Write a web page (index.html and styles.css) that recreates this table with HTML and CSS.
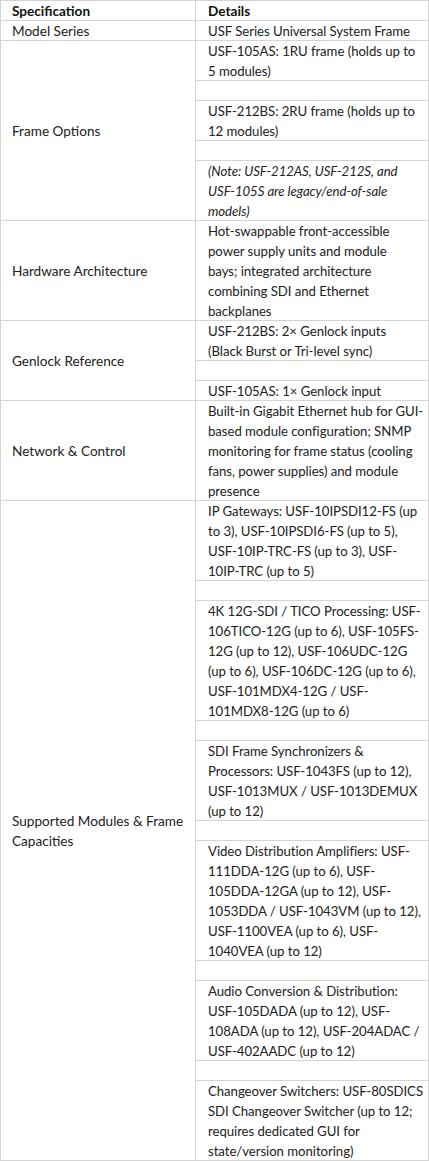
FILE: index.html
```html
<!DOCTYPE html>
<html lang="en">
<head>
<meta charset="utf-8">
<title>USF Series Universal System Frame – Specifications</title>
<link rel="stylesheet" href="styles.css">
</head>
<body>
<table class="spec-table">
  <colgroup>
    <col class="col-spec">
    <col class="col-details">
  </colgroup>
  <thead>
    <tr>
      <th class="spec">Specification</th>
      <th class="details">Details</th>
    </tr>
  </thead>
  <tbody>
    <tr>
      <td class="spec">Model Series</td>
      <td class="details">USF Series Universal System Frame</td>
    </tr>
    <tr>
      <td class="spec" rowspan="5">Frame Options</td>
      <td class="details">USF-105AS: 1RU frame (holds up to<br>5 modules)</td>
    </tr>
    <tr><td class="details blank"></td></tr>
    <tr><td class="details">USF-212BS: 2RU frame (holds up to<br>12 modules)</td></tr>
    <tr><td class="details blank"></td></tr>
    <tr><td class="details note">(Note: USF-212AS, USF-212S, and<br>USF-105S are legacy/end-of-sale<br>models)</td></tr>
    <tr>
      <td class="spec">Hardware Architecture</td>
      <td class="details">Hot-swappable front-accessible<br>power supply units and module<br>bays; integrated architecture<br>combining SDI and Ethernet<br>backplanes</td>
    </tr>
    <tr>
      <td class="spec" rowspan="3">Genlock Reference</td>
      <td class="details">USF-212BS: 2× Genlock inputs<br>(Black Burst or Tri-level sync)</td>
    </tr>
    <tr><td class="details blank"></td></tr>
    <tr><td class="details">USF-105AS: 1× Genlock input</td></tr>
    <tr>
      <td class="spec">Network &amp; Control</td>
      <td class="details">Built-in Gigabit Ethernet hub for GUI-<br>based module configuration; SNMP<br>monitoring for frame status (cooling<br>fans, power supplies) and module<br>presence</td>
    </tr>
    <tr>
      <td class="spec" rowspan="11">Supported Modules &amp; Frame Capacities</td>
      <td class="details">IP Gateways: USF-10IPSDI12-FS (up<br>to 3), USF-10IPSDI6-FS (up to 5),<br>USF-10IP-TRC-FS (up to 3), USF-<br>10IP-TRC (up to 5)</td>
    </tr>
    <tr><td class="details blank"></td></tr>
    <tr><td class="details">4K 12G-SDI / TICO Processing: USF-<br>106TICO-12G (up to 6), USF-105FS-<br>12G (up to 12), USF-106UDC-12G<br>(up to 6), USF-106DC-12G (up to 6),<br>USF-101MDX4-12G / USF-<br>101MDX8-12G (up to 6)</td></tr>
    <tr><td class="details blank"></td></tr>
    <tr><td class="details">SDI Frame Synchronizers &amp;<br>Processors: USF-1043FS (up to 12),<br>USF-1013MUX / USF-1013DEMUX<br>(up to 12)</td></tr>
    <tr><td class="details blank"></td></tr>
    <tr><td class="details">Video Distribution Amplifiers: USF-<br>111DDA-12G (up to 6), USF-<br>105DDA-12GA (up to 12), USF-<br>1053DDA / USF-1043VM (up to 12),<br>USF-1100VEA (up to 6), USF-<br>1040VEA (up to 12)</td></tr>
    <tr><td class="details blank"></td></tr>
    <tr><td class="details">Audio Conversion &amp; Distribution:<br>USF-105DADA (up to 12), USF-<br>108ADA (up to 12), USF-204ADAC /<br>USF-402AADC (up to 12)</td></tr>
    <tr><td class="details blank"></td></tr>
    <tr><td class="details">Changeover Switchers: USF-80SDICS<br>SDI Changeover Switcher (up to 12;<br>requires dedicated GUI for<br>state/version monitoring)</td></tr>
  </tbody>
</table>
</body>
</html>
```

FILE: styles.css
```css
html, body {
  margin: 0;
  padding: 0;
  background: #ffffff;
}

.spec-table {
  width: 429px;
  table-layout: fixed;
  border-collapse: separate;
  border-spacing: 0;
  border-top: 1px solid #d4d4d4;
  border-left: 1px solid #d4d4d4;
  font-family: Lato, "Open Sans", sans-serif;
  font-size: 13.6px;
  line-height: 20px;
  color: #222222;
}

.col-spec {
  width: 195px;
}

.col-details {
  width: 233px;
}

.spec-table th,
.spec-table td {
  padding: 0 1px 0 12px;
  text-align: left;
  box-shadow: inset -1px -1px 0 #d4d4d4;
}

.spec-table th {
  font-weight: 700;
  color: #111111;
  vertical-align: top;
}

.spec-table th.spec,
.spec-table td.spec {
  padding-left: 11px;
}

.spec-table td.spec {
  vertical-align: middle;
}

.spec-table td.details {
  vertical-align: top;
  white-space: nowrap;
  font-size: 13.2px;
  letter-spacing: -0.05px;
}

.spec-table td.blank {
  height: 20px;
}

.spec-table td.note {
  font-style: italic;
}
```
